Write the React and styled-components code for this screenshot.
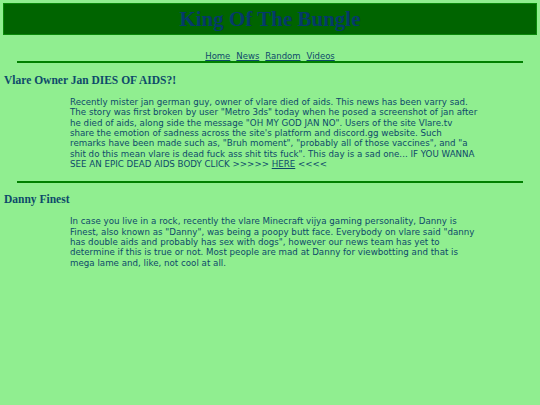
import React from 'react'
import styled, { createGlobalStyle } from 'styled-components'

const GlobalStyle = createGlobalStyle`
  html, body {
    margin: 0;
    padding: 0;
    background: #90ee90;
  }
  body {
    font-family: "DejaVu Sans", Verdana, sans-serif;
    color: #0e4a6a;
  }
`

const Page = styled.div`
  padding: 3px 3px 0 3px;
`

const Banner = styled.header`
  background: #006400;
  border: 1px solid #0a8a0a;
  height: 30px;
  display: flex;
  align-items: center;
  justify-content: center;
`

const Title = styled.h1`
  margin: 0;
  font-family: "Liberation Serif", "Times New Roman", serif;
  font-size: 21px;
  font-weight: bold;
  color: #053a6a;
`

const Nav = styled.nav`
  margin-top: 17px;
  text-align: center;
  font-size: 8.5px;
  line-height: 9px;
`

const NavLink = styled.a`
  color: #0e4a6a;
  text-decoration: underline;
  margin: 0 3px;
`

const Rule = styled.hr`
  border: none;
  height: 2px;
  background: #008000;
  margin: ${p => p.$top || 0}px 14px 0 14px;
`

const Article = styled.article`
  display: flex;
  flex-direction: column;
`

const Heading = styled.h2`
  margin: ${p => p.$top || 10}px 0 0 1px;
  font-family: "Liberation Serif", "Times New Roman", serif;
  font-size: 11.5px;
  font-weight: bold;
  color: #0e4a6a;
`

const Body = styled.p`
  margin: ${p => p.$top || 11}px 0 0 0;
  padding: 0 0 0 67px;
  font-size: 8.7px;
  line-height: 10.35px;
  white-space: nowrap;
  color: #0e4a6a;

  a {
    color: #0e4a6a;
  }
`

const links = ['Home', 'News', 'Random', 'Videos']

const Lines = ({ lines }) =>
  lines.map((line, i) => (
    <React.Fragment key={i}>
      {line}
      {i < lines.length - 1 && <br />}
    </React.Fragment>
  ))

const janLines = [
  'Recently mister jan german guy, owner of vlare died of aids. This news has been varry sad.',
  'The story was first broken by user "Metro 3ds" today when he posed a screenshot of jan after',
  'he died of aids, along side the message "OH MY GOD JAN NO". Users of the site Vlare.tv',
  "share the emotion of sadness across the site's platform and discord.gg website. Such",
  'remarks have been made such as, "Bruh moment", "probably all of those vaccines", and "a',
  'shit do this mean vlare is dead fuck ass shit tits fuck". This day is a sad one... IF YOU WANNA',
  <>SEE AN EPIC DEAD AIDS BODY CLICK &gt;&gt;&gt;&gt;&gt; <a href="#">HERE</a> &lt;&lt;&lt;&lt;</>,
]

const dannyLines = [
  'In case you live in a rock, recently the vlare Minecraft vijya gaming personality, Danny is',
  'Finest, also known as "Danny", was being a poopy butt face. Everybody on vlare said "danny',
  'has double aids and probably has sex with dogs", however our news team has yet to',
  'determine if this is true or not. Most people are mad at Danny for viewbotting and that is',
  'mega lame and, like, not cool at all.',
]

const App = () => (
  <Page>
    <GlobalStyle />
    <Banner>
      <Title>King Of The Bungle</Title>
    </Banner>
    <Nav>
      {links.map(l => (
        <NavLink key={l} href="#">{l}</NavLink>
      ))}
    </Nav>
    <Rule />
    <Article>
      <Heading $top={11}>Vlare Owner Jan DIES OF AIDS?!</Heading>
      <Body>
        <Lines lines={janLines} />
      </Body>
    </Article>
    <Rule $top={12} />
    <Article>
      <Heading>Danny Finest</Heading>
      <Body $top={11}>
        <Lines lines={dannyLines} />
      </Body>
    </Article>
  </Page>
)

export default App
